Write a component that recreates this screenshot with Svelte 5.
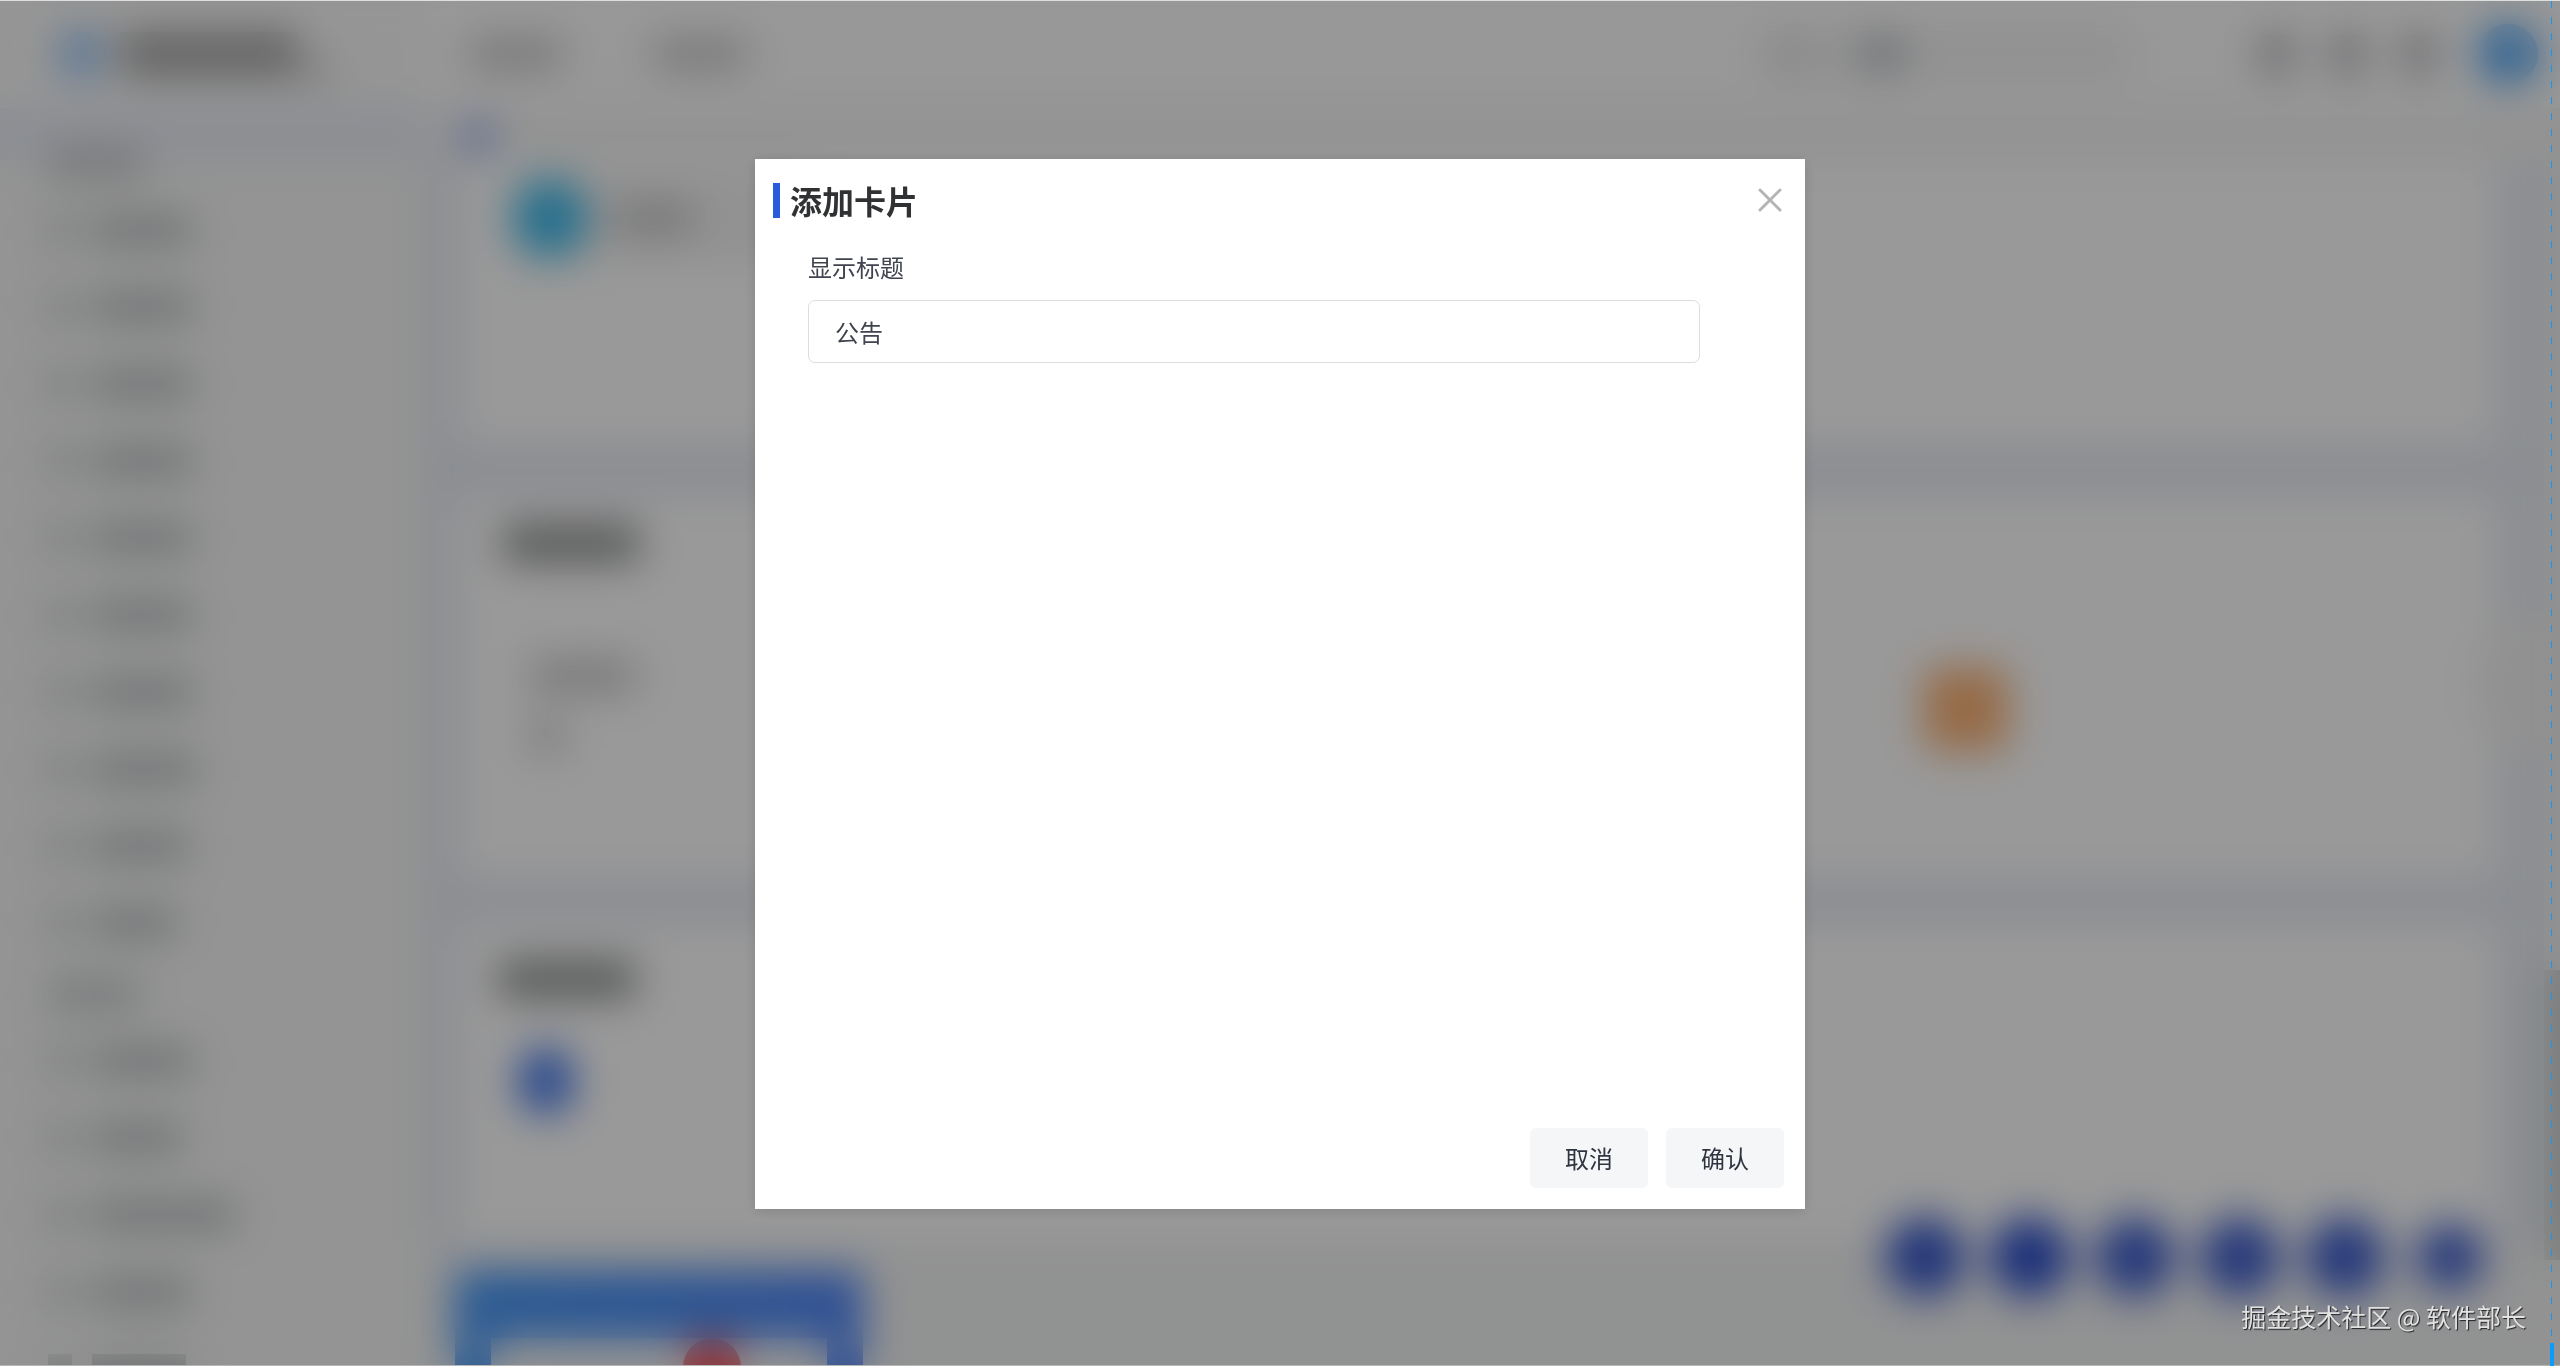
<script>
  let title = $state('公告');
  let open = $state(true);
  const close = () => (open = false);

  const groups = [
    { width: 96, items: [100, 100, 100, 100, 100, 100, 100, 104, 96, 84] },
    { width: 92, items: [100, 90, 142, 98, 94, 100] }
  ];
</script>

<div class="page" aria-hidden={open}>
  <header class="topbar">
    <div class="brand">
      <i class="logo"></i>
      <i class="name"></i>
      <i class="tag"></i>
    </div>
    <div class="tabs"><i></i><i></i></div>
    <div class="search"><i></i><i></i></div>
    <div class="tools"><i></i><i></i><i></i><i class="avatar"></i></div>
  </header>

  <div class="body">
    <nav class="side">
      {#each groups as group}
        <div class="group"><i style="width:{group.width}px"></i></div>
        {#each group.items as width}
          <div class="item"><i class="glyph"></i><i class="word" style="width:{width}px"></i></div>
        {/each}
      {/each}
    </nav>

    <main class="main">
      <div class="crumb"><i></i></div>
      <section class="card first">
        <div class="tile"><i class="round"></i><i class="caption"></i></div>
      </section>
      <section class="card second">
        <i class="heading"></i>
        <div class="row">
          <div class="lines"><i></i><i></i></div>
          <i class="orange"></i>
        </div>
      </section>
      <section class="card third">
        <i class="heading"></i>
        <i class="pin"></i>
      </section>
      <div class="tail">
        <section class="widget"><div class="sheet"><i></i></div></section>
      </div>
    </main>
  </div>

  <i class="handle"></i>
  <i class="shade"></i>
  <div class="floats"><i></i><i></i><i></i><i></i><i></i><i></i></div>
</div>

{#if open}
  <div class="mask">
    <form class="dialog" role="dialog" aria-modal="true" aria-labelledby="dialog-title" onsubmit={(e) => { e.preventDefault(); close(); }}>
      <div class="head">
        <h1 id="dialog-title">添加卡片</h1>
        <button class="close" type="button" aria-label="关闭" onclick={close}>
          <svg viewBox="0 0 24 24" width="24" height="24" fill="none" stroke="currentColor" stroke-width="3" stroke-linecap="round">
            <path d="M2 2 22 22M22 2 2 22" />
          </svg>
        </button>
      </div>
      <div class="field">
        <label for="card-title">显示标题</label>
        <input id="card-title" type="text" bind:value={title} />
      </div>
      <div class="actions">
        <button type="button" onclick={close}>取消</button>
        <button type="submit">确认</button>
      </div>
    </form>
  </div>
{/if}

<div class="guide"></div>
<div class="thumb"></div>
<p class="credit">掘金技术社区 @ 软件部长</p>

<style>
  :global(body) {
    overflow: hidden;
    font-family: "Noto Sans CJK SC", "Noto Sans", sans-serif;
  }
  * { box-sizing: border-box; }
  i { display: block; flex: none; }

  .page {
    position: relative;
    height: 100vh;
    overflow: hidden;
    display: flex;
    flex-direction: column;
    background: #e7ebf3;
  }
  .topbar {
    flex: none;
    height: 108px;
    display: flex;
    align-items: center;
    padding-right: 22px;
    background: #fdfdfd;
  }
  .brand {
    width: 425px;
    height: 100%;
    padding-left: 60px;
    display: flex;
    align-items: center;
    background: #f9f9f9;
  }
  .logo { width: 42px; height: 46px; border-radius: 50%; background: #86bcf8; }
  .name { width: 178px; height: 44px; margin-left: 18px; background: #a4a4a4; }
  .tag { width: 34px; height: 14px; margin-top: 36px; background: #c0c0c0; }
  .tabs { display: flex; gap: 92px; padding-left: 45px; }
  .tabs i { width: 92px; height: 30px; background: #c6c6c6; }
  .search {
    width: 370px;
    height: 56px;
    margin-left: auto;
    padding-left: 16px;
    display: flex;
    align-items: center;
    gap: 50px;
    background: #f3f3f3;
  }
  .search i { width: 34px; height: 26px; background: #dadde1; }
  .search i + i { width: 46px; height: 32px; background: #b9bdc4; }
  .tools { display: flex; align-items: center; gap: 40px; margin-left: 132px; }
  .tools i { width: 31px; height: 38px; background: #adadb4; }
  .tools .avatar { width: 60px; height: 60px; border-radius: 50%; background: #4ba3f4; margin-left: 4px; }

  .body { flex: 1; min-height: 0; display: flex; }
  .side {
    flex: none;
    width: 425px;
    padding-top: 22px;
    overflow: hidden;
    background: linear-gradient(#e9edf6 0 52px, #f6f7f6 52px);
  }
  .group { height: 61px; padding: 5px 0 0 48px; display: flex; align-items: center; }
  .group i { height: 28px; background: #c4c5c8; }
  .item { height: 77px; padding-left: 48px; display: flex; align-items: center; gap: 20px; }
  .glyph { width: 24px; height: 30px; background: #c8cacd; }
  .word { height: 30px; background: #bcbec1; }

  .main {
    flex: 1;
    min-width: 0;
    display: flex;
    flex-direction: column;
    padding: 0 46px 0 32px;
    border-right: 16px solid #f4f4f4;
  }
  .crumb { flex: none; height: 52px; margin: 0 -46px 0 -32px; padding: 12px 36px; background: #f5f5f5; }
  .crumb i { width: 34px; height: 34px; border-radius: 50%; background: #8fa6f0; }
  .card { flex: none; background: #fff; }
  .first { height: 286px; padding: 14px 55px; }
  .tile { width: 300px; height: 88px; display: flex; align-items: center; gap: 26px; background: #f3f3f3; }
  .round { width: 76px; height: 80px; border-radius: 50%; background: #3fbaeb; }
  .caption { width: 78px; height: 30px; background: #c3c3c3; }
  .second { height: 386px; margin-top: 48px; padding: 30px 46px; }
  .heading { width: 136px; height: 38px; background: #909293; }
  .row { display: flex; justify-content: space-between; padding: 98px 444px 0 28px; }
  .lines i { width: 104px; height: 32px; background: #c8c8c8; }
  .lines i + i { width: 32px; margin-top: 28px; }
  .orange { width: 84px; height: 84px; margin-top: 7px; border-radius: 12px; background: #fab276; }
  .third { height: 318px; margin-top: 42px; padding: 38px 42px; }
  .pin { width: 54px; height: 66px; margin: 50px 0 0 20px; border-radius: 26px; background: #3f75ea; }
  .tail { flex: 1; display: flex; margin: 0 -46px 0 -32px; padding: 30px 30px 0; background: #f2f3f4; }
  .widget {
    width: 408px;
    padding: 68px 36px 0;
    background: linear-gradient(90deg, #4698f5, #5085f5);
  }
  .sheet { height: 100%; overflow: hidden; padding: 0 0 0 192px; background: #f6f6f6; }
  .sheet i { width: 58px; height: 58px; border-radius: 50%; background: #f45555; }

  .handle { position: absolute; right: 0; top: 610px; width: 80px; height: 150px; border-radius: 60px 0 0 60px; background: #f1f1f1; }
  .shade { position: absolute; right: 0; top: 970px; width: 16px; height: 290px; background: #cfd2cf; }
  .floats { position: absolute; right: 77px; bottom: 69px; display: flex; align-items: center; gap: 25px; }
  .floats i { width: 80px; height: 80px; border-radius: 50%; background: #3f5ecb; }
  .floats i:nth-child(1) { background: #3657c9; }
  .floats i:nth-child(2) { background: #2c4eca; }
  .floats i:last-child { width: 66px; height: 66px; margin-left: 7px; }

  .mask {
    position: fixed;
    inset: 0;
    display: flex;
    align-items: center;
    justify-content: center;
    padding-top: 2px;
    border-top: 1px solid #dcdfdd;
    border-bottom: 1px solid #b5b6b6;
    background: rgba(0, 0, 0, 0.4);
    backdrop-filter: blur(20px);
  }
  .dialog {
    width: min(1050px, 92vw);
    min-height: min(1050px, 92vh);
    display: flex;
    flex-direction: column;
    padding: 17px 21px 21px 18px;
    background: #fff;
    box-shadow: 0 2px 12px rgba(0, 0, 0, 0.14);
  }
  .head { display: flex; align-items: center; justify-content: space-between; height: 48px; }
  h1 {
    margin: 0;
    padding-left: 10px;
    border-left: 7px solid #2a5bdc;
    font-size: 32px;
    line-height: 35px;
    font-weight: 700;
    color: #303133;
  }
  button { font-family: inherit; cursor: pointer; border: 0; }
  .close { display: flex; padding: 2px; background: none; color: #b4b4b4; }
  .field { display: flex; flex-direction: column; gap: 15px; padding: 25px 84px 0 35px; }
  label { font-size: 24px; line-height: 36px; color: #40444e; }
  input {
    width: 100%;
    height: 63px;
    padding: 0 26px;
    border: 1px solid #dcdddf;
    border-radius: 7px;
    outline: none;
    background: #fff;
    font-family: inherit;
    font-size: 24px;
    color: #40444e;
  }
  .actions { display: flex; justify-content: flex-end; gap: 18px; margin-top: auto; }
  .actions button {
    height: 60px;
    padding: 0 35px;
    border-radius: 6px;
    background: #f4f6f8;
    font-size: 24px;
    line-height: 36px;
    color: #303440;
  }

  .guide {
    position: fixed;
    top: 1px;
    bottom: 24px;
    right: 8px;
    width: 1px;
    background: repeating-linear-gradient(#1a96ea 0 7px, transparent 7px 16px);
  }
  .thumb { position: fixed; right: 6px; bottom: 0; width: 4px; height: 23px; background: #0d9bfb; }
  .credit {
    position: fixed;
    right: 34px;
    bottom: 32px;
    margin: 0;
    font-size: 25px;
    line-height: 36px;
    color: #e2e2e2;
    text-shadow: 1px 1px 1px #222;
  }
</style>
